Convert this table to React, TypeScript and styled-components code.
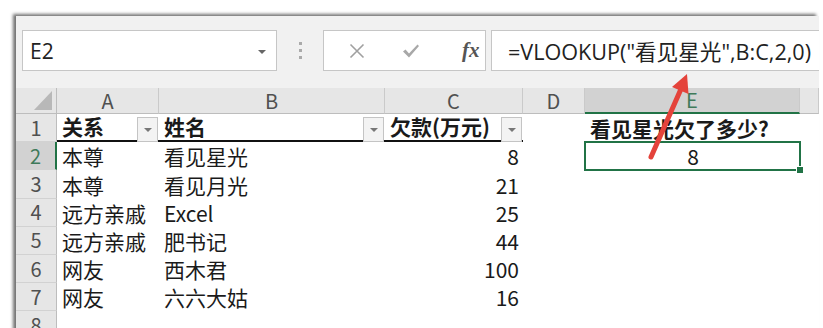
import { Fragment } from "react";
import styled, { createGlobalStyle } from "styled-components";

const green = "#217346";

const GlobalStyle = createGlobalStyle`
  body {
    margin: 0;
    background: #fff;
    overflow: hidden;
  }
`

const Page = styled.div`
  position: relative;
  width: 823px;
  height: 328px;
  overflow: hidden;
  background: #fff;
  font-family: "Noto Sans CJK SC", "Noto Sans", sans-serif;
  color: #1a1a1a;
`

const Window = styled.div`
  margin: 16px 0 0 16px;
  width: 803px;
  height: 340px;
  background: #f1f1f1;
  box-shadow: -3px -2px 3px rgba(0, 0, 0, 0.55);
  overflow: hidden;
`

const FormulaBar = styled.div`
  display: flex;
  align-items: center;
  height: 72px;
  box-sizing: border-box;
  padding: 14px 0 17px 6px;
`

const Field = styled.div`
  height: 41px;
  box-sizing: border-box;
  border: 1px solid #c6c6c6;
  background: #fff;
  display: flex;
  align-items: center;
`

const NameBox = styled(Field)`
  width: 255px;
  padding: 0 10px 0 7px;
  justify-content: space-between;
  font-family: "Open Sans", sans-serif;
  font-size: 21px;
  color: #222;
`

const Caret = styled.span`
  width: 0;
  height: 0;
  border-left: 4px solid transparent;
  border-right: 4px solid transparent;
  border-top: 4px solid #666;
  margin-top: 2px;
`

const Grip = styled.div`
  width: 46px;
  display: flex;
  flex-direction: column;
  align-items: center;
  gap: 4px;

  span {
    width: 3px;
    height: 3px;
    background: #aaa;
  }
`

const FxButtons = styled(Field)`
  width: 163px;
  padding-left: 19px;
  gap: 26px;
`

const IconSlot = styled.span`
  width: 30px;
  display: flex;
  justify-content: center;
  align-items: center;
`

const Fx = styled.span`
  width: 30px;
  margin-left: 5px;
  text-align: center;
  font-family: "Liberation Serif", serif;
  font-style: italic;
  font-weight: bold;
  font-size: 21px;
  color: #555;
`

const FormulaInput = styled(Field)`
  flex: 1;
  margin-left: 5px;
  border-right: none;
  padding-left: 16px;
  font-family: "Open Sans", "Noto Sans CJK SC", sans-serif;
  font-size: 21.6px;
  color: #222;
  white-space: nowrap;
`

const Sheet = styled.div`
  display: grid;
  grid-template-columns: 41px 102px 226px 138px 62px 215px 1fr;
  grid-template-rows: 26px;
  grid-auto-rows: 28.2px;
  background: #fff;
`

const Corner = styled.div`
  position: relative;
  background: #e6e6e6;
  border-right: 1px solid #bdbdbd;
  border-bottom: 1px solid #bdbdbd;

  &::after {
    content: "";
    position: absolute;
    right: 4px;
    bottom: 3px;
    width: 18px;
    height: 19px;
    background: #b8b8b8;
    clip-path: polygon(100% 0, 100% 100%, 0 100%);
  }
`

const ColHeader = styled.div<{ $active?: boolean }>`
  display: flex;
  align-items: center;
  justify-content: center;
  box-sizing: border-box;
  background: ${(p) => (p.$active ? "#d2d2d2" : "#e6e6e6")};
  border-right: 1px solid #cacaca;
  border-bottom: ${(p) => (p.$active ? `2px solid ${green}` : "1px solid #bdbdbd")};
  font-size: 20px;
  line-height: 1;
  color: ${(p) => (p.$active ? "#3f7a5a" : "#505050")};
`

const RowHeader = styled.div<{ $active?: boolean }>`
  display: flex;
  align-items: center;
  justify-content: center;
  box-sizing: border-box;
  background: ${(p) => (p.$active ? "#d2d2d2" : "#e6e6e6")};
  border-right: ${(p) => (p.$active ? `2px solid ${green}` : "1px solid #bdbdbd")};
  border-bottom: 1px solid #d2d2d2;
  font-size: 20px;
  line-height: 1;
  color: ${(p) => (p.$active ? "#3f7a5a" : "#505050")};
`

const Cell = styled.div<{ $right?: boolean; $center?: boolean; $head?: boolean; $line?: boolean; $selected?: boolean }>`
  position: relative;
  display: flex;
  align-items: flex-end;
  justify-content: ${(p) => (p.$right ? "flex-end" : p.$center ? "center" : "flex-start")};
  box-sizing: border-box;
  padding: 0 4px 1px 5px;
  font-size: 21px;
  line-height: 26px;
  font-weight: ${(p) => (p.$head ? 700 : 400)};
  white-space: nowrap;
  border-bottom: ${(p) => (p.$line ? "2px solid #111" : "none")};

  ${(p) =>
    p.$selected &&
    `
    &::after {
      content: "";
      position: absolute;
      inset: -1px;
      border: 2px solid ${green};
    }
    &::before {
      content: "";
      position: absolute;
      right: -4px;
      bottom: -4px;
      width: 6px;
      height: 6px;
      background: ${green};
      border: 1px solid #fff;
      z-index: 1;
    }
  `}
`

const FilterButton = styled.span`
  position: absolute;
  right: 1px;
  top: 3px;
  width: 21px;
  height: 25px;
  box-sizing: border-box;
  border: 1px solid #c4c4c4;
  background: #f3f3f3;
  display: flex;
  align-items: center;
  justify-content: center;

  &::after {
    content: "";
    border-left: 4px solid transparent;
    border-right: 4px solid transparent;
    border-top: 4px solid #777;
  }
`

const Arrow = styled.svg`
  position: absolute;
  left: 0;
  top: 0;
  pointer-events: none;
`

const rows: [string, string, number][] = [
  ["本尊", "看见星光", 8],
  ["本尊", "看见月光", 21],
  ["远方亲戚", "Excel", 25],
  ["远方亲戚", "肥书记", 44],
  ["网友", "西木君", 100],
  ["网友", "六六大姑", 16],
];

const cols = ["A", "B", "C", "D", "E", ""];

export default function App() {
  return (
    <Page>
      <GlobalStyle />
      <Window>
        <FormulaBar>
          <NameBox>
            E2
            <Caret />
          </NameBox>
          <Grip>
            <span />
            <span />
            <span />
          </Grip>
          <FxButtons>
            <IconSlot>
              <svg width="16" height="16" viewBox="0 0 16 16">
                <path d="M1.5 1.5 L14.5 14.5 M14.5 1.5 L1.5 14.5" stroke="#a0a0a0" strokeWidth="1.6" fill="none" />
              </svg>
            </IconSlot>
            <IconSlot>
              <svg width="18" height="16" viewBox="0 0 18 16">
                <path d="M1 8.5 L3.5 6.5 L7 10.5 L15.5 1.5 L17 3 L7 14.5 Z" fill="#a8a8a8" />
              </svg>
            </IconSlot>
            <Fx>fx</Fx>
          </FxButtons>
          <FormulaInput>=VLOOKUP("看见星光",B:C,2,0)</FormulaInput>
        </FormulaBar>
        <Sheet>
          <Corner />
          {cols.map((c) => (
            <ColHeader key={c || "F"} $active={c === "E"}>
              {c}
            </ColHeader>
          ))}

          <RowHeader>1</RowHeader>
          <Cell $head $line>
            关系
            <FilterButton />
          </Cell>
          <Cell $head $line>
            姓名
            <FilterButton />
          </Cell>
          <Cell $head $line>
            欠款(万元)
            <FilterButton />
          </Cell>
          <Cell />
          <Cell $head>看见星光欠了多少?</Cell>
          <Cell />

          {rows.map(([rel, name, debt], i) => (
            <Fragment key={i}>
              <RowHeader $active={i === 0}>{i + 2}</RowHeader>
              <Cell>{rel}</Cell>
              <Cell>{name}</Cell>
              <Cell $right>{debt}</Cell>
              <Cell />
              {i === 0 ? (
                <Cell $center $selected>
                  8
                </Cell>
              ) : (
                <Cell />
              )}
              <Cell />
            </Fragment>
          ))}

          <RowHeader>8</RowHeader>
        </Sheet>
      </Window>
      <Arrow width="823" height="328" viewBox="0 0 823 328">
        <line x1="651" y1="157" x2="681" y2="89" stroke="#e4433b" strokeWidth="5" strokeLinecap="round" />
        <polygon points="687,74 688.5,94 672,87" fill="#e4433b" />
      </Arrow>
    </Page>
  );
}
